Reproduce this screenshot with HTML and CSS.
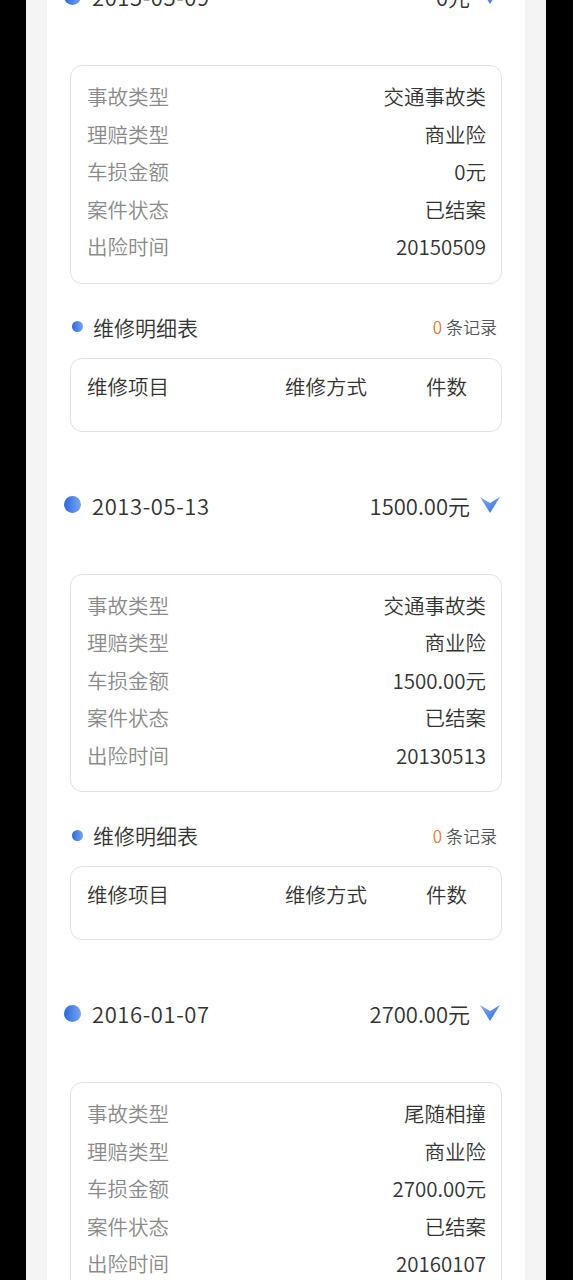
FILE: index.html
```html
<!DOCTYPE html>
<html lang="zh-CN">
<head>
    <meta charset="UTF-8">
    <meta name="viewport" content="width=device-width, initial-scale=1.0">
    <title>出险记录</title>
    <link rel="stylesheet" href="styles.css">
</head>
<body>

    <div class="screen">
        <div class="panel">

            <!-- 2015-05-09 -->
            <section class="claim">
                <div class="claim-head">
                    <span class="dot"></span>
                    <span class="claim-date">2015-05-09</span>
                    <span class="claim-amount">0元</span>
                    <svg class="chevron" width="20" height="16" viewBox="0 0 20 16"><use href="#chev"/></svg>
                </div>
                <div class="info-box">
                    <div class="info-row"><span>事故类型</span><b>交通事故类</b></div>
                    <div class="info-row"><span>理赔类型</span><b>商业险</b></div>
                    <div class="info-row"><span>车损金额</span><b>0元</b></div>
                    <div class="info-row"><span>案件状态</span><b>已结案</b></div>
                    <div class="info-row"><span>出险时间</span><b>20150509</b></div>
                </div>
                <div class="sub-head">
                    <span class="sub-dot"></span>
                    <span class="sub-title">维修明细表</span>
                    <span class="sub-count"><em>0</em> 条记录</span>
                </div>
                <div class="repair-box">
                    <span>维修项目</span><span>维修方式</span><span>件数</span>
                </div>
            </section>

            <!-- 2013-05-13 -->
            <section class="claim">
                <div class="claim-head">
                    <span class="dot"></span>
                    <span class="claim-date">2013-05-13</span>
                    <span class="claim-amount">1500.00元</span>
                    <svg class="chevron" width="20" height="16" viewBox="0 0 20 16"><use href="#chev"/></svg>
                </div>
                <div class="info-box">
                    <div class="info-row"><span>事故类型</span><b>交通事故类</b></div>
                    <div class="info-row"><span>理赔类型</span><b>商业险</b></div>
                    <div class="info-row"><span>车损金额</span><b>1500.00元</b></div>
                    <div class="info-row"><span>案件状态</span><b>已结案</b></div>
                    <div class="info-row"><span>出险时间</span><b>20130513</b></div>
                </div>
                <div class="sub-head">
                    <span class="sub-dot"></span>
                    <span class="sub-title">维修明细表</span>
                    <span class="sub-count"><em>0</em> 条记录</span>
                </div>
                <div class="repair-box">
                    <span>维修项目</span><span>维修方式</span><span>件数</span>
                </div>
            </section>

            <!-- 2016-01-07 -->
            <section class="claim">
                <div class="claim-head">
                    <span class="dot"></span>
                    <span class="claim-date">2016-01-07</span>
                    <span class="claim-amount">2700.00元</span>
                    <svg class="chevron" width="20" height="16" viewBox="0 0 20 16"><use href="#chev"/></svg>
                </div>
                <div class="info-box">
                    <div class="info-row"><span>事故类型</span><b>尾随相撞</b></div>
                    <div class="info-row"><span>理赔类型</span><b>商业险</b></div>
                    <div class="info-row"><span>车损金额</span><b>2700.00元</b></div>
                    <div class="info-row"><span>案件状态</span><b>已结案</b></div>
                    <div class="info-row"><span>出险时间</span><b>20160107</b></div>
                </div>
                <div class="sub-head">
                    <span class="sub-dot"></span>
                    <span class="sub-title">维修明细表</span>
                    <span class="sub-count"><em>0</em> 条记录</span>
                </div>
                <div class="repair-box">
                    <span>维修项目</span><span>维修方式</span><span>件数</span>
                </div>
            </section>

        </div>
    </div>

    <svg width="0" height="0" class="defs">
        <defs>
            <linearGradient id="chevGrad" x1="0" y1="0" x2="1" y2="1">
                <stop offset="0" stop-color="#86b0f4"/>
                <stop offset="1" stop-color="#2e6ce0"/>
            </linearGradient>
            <symbol id="chev" viewBox="0 0 20 16">
                <path d="M0 0 L10 6 L20 0 L10 16 Z" fill="url(#chevGrad)"/>
            </symbol>
        </defs>
    </svg>

</body>
</html>
```

FILE: styles.css
```css
body { margin: 0; background: #000; font-family: "Noto Sans CJK SC", "Noto Sans", sans-serif; font-weight: 350; color: #333; height: 1280px; overflow: hidden; }
.screen { margin: 0 27px 0 26px; background: #f5f4f5; padding: 0 21px; height: 1280px; overflow: hidden; }
.panel { background: #fff; margin-top: -24px; padding: 0 23px; box-shadow: 0 0 3px rgba(0,0,0,0.05); }
.defs { position: absolute; }

.claim { padding-bottom: 53px; }
.claim-head { height: 40px; display: flex; align-items: center; margin: 0 2px 0 -6px; font-size: 22px; }
.dot { width: 17px; height: 17px; border-radius: 50%; background: linear-gradient(90deg, #2c69de, #78a5f0); margin-right: 11px; }
.claim-date { flex: 1; letter-spacing: 0.6px; }
.claim-amount { margin-right: 10px; }
.chevron { display: block; }

.info-box { margin-top: 49px; border: 1px solid #e2e2e2; border-radius: 12px; padding: 12px 15px 17px 16px; }
.info-row { display: flex; justify-content: space-between; height: 37.5px; line-height: 37.5px; font-size: 20.5px; }
.info-row span { color: #8a8a8a; }
.info-row b { font-weight: 350; color: #333; }

.sub-head { margin-top: 28px; height: 30px; display: flex; align-items: center; padding-left: 2px; }
.sub-dot { width: 11px; height: 11px; border-radius: 50%; background: linear-gradient(90deg, #2c69de, #78a5f0); margin-right: 10px; }
.sub-title { flex: 1; font-size: 21px; }
.sub-count { font-size: 17px; color: #555; margin-right: 5px; }
.sub-count em { font-style: normal; color: #e2793a; }

.repair-box { margin-top: 16px; height: 74px; box-sizing: border-box; border: 1px solid #e2e2e2; border-radius: 12px; padding: 13px 16px 0; display: grid; grid-template-columns: 198px 141px 1fr; align-content: start; font-size: 20.5px; line-height: 28px; color: #333; }
```
